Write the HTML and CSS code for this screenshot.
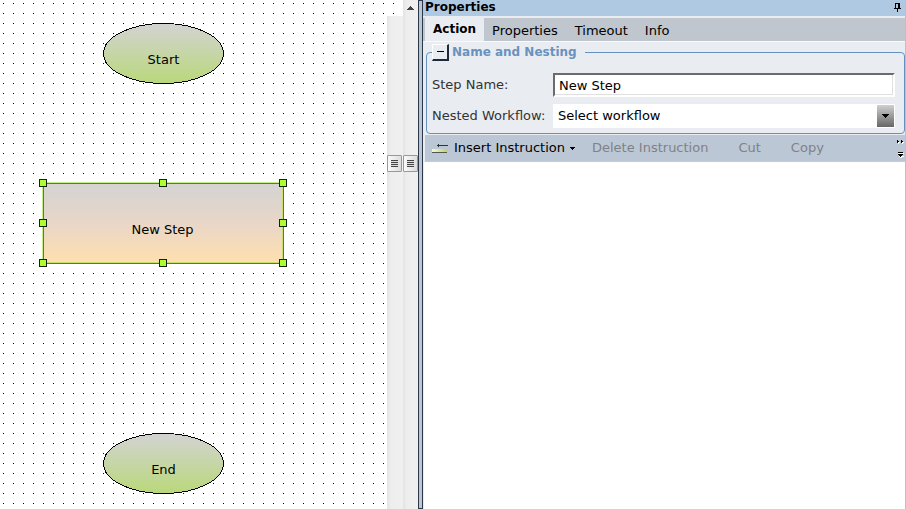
FILE: index.html
```html
<!DOCTYPE html>
<html lang="en">
<head>
<meta charset="utf-8">
<title>Workflow designer</title>
<link rel="stylesheet" href="styles.css">
</head>
<body>
<div class="app">
  <main class="designer">
    <div class="canvas">
      <div class="node node-start">
        <svg class="shape" viewBox="0 0 121 61" aria-hidden="true">
          <defs><linearGradient id="terminal" x1="0" y1="0" x2="0" y2="1"><stop offset="0" stop-color="#d3d3d3"/><stop offset="1" stop-color="#b9d87a"/></linearGradient></defs>
          <ellipse cx="60.5" cy="30.5" rx="60" ry="30" fill="url(#terminal)" stroke="#000"/>
        </svg>
        <span class="node-label">Start</span>
      </div>
      <div class="node node-step">
        <span class="node-label">New Step</span>
        <i class="handle left top"></i><i class="handle center top"></i><i class="handle right top"></i>
        <i class="handle left middle"></i><i class="handle right middle"></i>
        <i class="handle left bottom"></i><i class="handle center bottom"></i><i class="handle right bottom"></i>
      </div>
      <div class="node node-end">
        <svg class="shape" viewBox="0 0 121 61" aria-hidden="true"><ellipse cx="60.5" cy="30.5" rx="60" ry="30" fill="url(#terminal)" stroke="#000"/></svg>
        <span class="node-label">End</span>
      </div>
    </div>
    <div class="scroll scroll-inner"><div class="thumb"><i class="grip"></i></div></div>
    <div class="scroll scroll-outer">
      <svg class="scroll-up" viewBox="0 0 7 4" aria-hidden="true"><path d="M3 0h1v1h1v1h1v1h1v1H0V3h1V2h1V1h1z" fill="#444"/></svg>
      <div class="thumb"><i class="grip"></i></div>
    </div>
  </main>
  <div class="splitter"></div>
  <aside class="panel">
    <header class="title">
      <h1>Properties</h1>
      <svg class="pin" viewBox="0 0 7 9" aria-hidden="true"><path d="M1 0h5v5h1v1H4v3H3V6H0V5h1zM2 1v4h2V1z" fill="#000" fill-rule="evenodd"/></svg>
    </header>
    <nav class="tabs">
      <button class="tab active" type="button">Action</button>
      <button class="tab" type="button">Properties</button>
      <button class="tab" type="button">Timeout</button>
      <button class="tab" type="button">Info</button>
    </nav>
    <form class="body">
      <fieldset class="group">
        <legend><button class="collapse" type="button" aria-label="Collapse"><i></i></button>Name and Nesting</legend>
        <div class="fields">
          <label for="step">Step Name:</label>
          <input id="step" type="text" value="New Step">
          <label for="nested">Nested Workflow:</label>
          <div class="combo">
            <select id="nested"><option>Select workflow</option></select>
            <span class="combo-arrow"><svg viewBox="0 0 7 4" aria-hidden="true"><path d="M0 0h7v1H6v1H5v1H4v1H3V3H2V2H1V1H0z"/></svg></span>
          </div>
        </div>
      </fieldset>
    </form>
    <div class="toolbar">
      <button class="tool insert" type="button">
        <svg class="insert-icon" viewBox="0 0 16 10" aria-hidden="true">
          <defs><linearGradient id="bar"><stop offset="0" stop-color="#f2f8dd"/><stop offset="1" stop-color="#b5d56c"/></linearGradient></defs>
          <path d="M0 6h15v3H0z" fill="url(#bar)"/><path d="M0 9h15v1H0z" fill="#555"/><path d="M5 2h11v1H7v1H6V3H5zM6 1h1v1H6z" fill="#333"/>
        </svg>
        Insert Instruction
        <svg class="caret" viewBox="0 0 5 3" aria-hidden="true"><path d="M0 0h5v1H4v1H3v1H2V2H1V1H0z"/></svg>
      </button>
      <button class="tool" type="button" disabled>Delete Instruction</button>
      <button class="tool" type="button" disabled>Cut</button>
      <button class="tool" type="button" disabled>Copy</button>
      <button class="overflow" type="button" aria-label="More">
        <svg viewBox="0 0 7 19" aria-hidden="true"><path d="M1 2h1v1h1v1H2v1H1zM5 2h1v1h1v1H6v1H5zM1 14h6v1H1zM2 17h5v1H5v1H3v-1H2z" fill="#fff"/><path d="M0 1h1v1h1v1H1v1H0zM4 1h1v1h1v1H5v1H4zM1 13h5v1H1zM1 15h5v1H5v1H4v1H3v-1H2v-1H1z"/></svg>
      </button>
    </div>
    <div class="instructions"></div>
  </aside>
</div>
</body>
</html>
```

FILE: styles.css
```css
* { box-sizing: border-box; }
html, body { height: 100%; }
body { margin: 0; overflow: hidden; font: 13px/16px "DejaVu Sans", Verdana, sans-serif; color: #000; background: #fff; }
button, input, select { font: inherit; color: inherit; margin: 0; }
button { padding: 0; border: 0; background: none; white-space: nowrap; }
svg { shape-rendering: crispEdges; }

.app { display: grid; grid-template-columns: 418fr 5px 483fr; height: 100%; }

/* Diagram canvas: one grid dot every 10px */
.designer { display: flex; min-width: 0; background: conic-gradient(from 270deg at 1px 1px, #000 90deg, transparent 0) 3px 3px / 10px 10px #fff; }
.canvas { position: relative; flex: 1; min-width: 0; }
.node { position: absolute; display: flex; justify-content: center; }
.node-start, .node-end { left: 103px; width: 121px; height: 61px; padding-top: 29px; }
.node-start { top: 23px; }
.node-end { top: 433px; }
.shape { position: absolute; inset: 0; width: 100%; height: 100%; }
.node-label { position: relative; }
.node-step { left: 42px; top: 182px; width: 242px; height: 82px; padding-top: 40px; border: 1px solid #4f8312; border-width: 0 1px 1px 0; background: linear-gradient(#d3d3d3, #e8d6c8 50%, #ffdfae); box-shadow: inset 1px 1px #c4ee88, inset 2px 2px #5c7d2c, inset -1px -1px #c9e070; }
.handle { position: absolute; width: 8px; height: 8px; border: 1px solid #10200c; background: #adff2f; }
.left { left: -3px; }
.center { left: 117px; }
.right { right: -4px; }
.top { top: -3px; }
.middle { top: 37px; }
.bottom { bottom: -4px; }

.scroll { display: flex; flex-direction: column; background: linear-gradient(90deg, #e3e3e3, #eee 4px, #f0f0f0); }
.scroll-inner { width: 16px; margin-top: 16px; padding-top: 139px; }
.scroll-outer { width: 15px; padding-top: 6px; }
.scroll-up { width: 7px; height: 4px; margin: 0 4px 145px; }
.thumb { width: 15px; height: 17px; padding: 4px 3px; border: 1px solid #999; border-radius: 1px; background: linear-gradient(90deg, #fafafa, #ddd); }
.grip { display: block; width: 7px; height: 7px; background: repeating-linear-gradient(#444 0 1px, #ddd 1px 2px); }

.splitter { border: 1px solid #2c3848; background: #bcc7d5; }

.panel { display: flex; flex-direction: column; min-width: 0; border-right: 1px solid #c0c0c0; background: #e9edf2; }
.title { display: flex; align-items: center; justify-content: space-between; height: 16px; padding: 0 4px 2px 2px; background: #b0c9e2; }
.title h1 { margin: 0; font-size: 12px; line-height: 14px; }
.pin { width: 7px; height: 9px; }
.tabs { display: flex; align-items: flex-end; height: 25px; padding-left: 2px; background: linear-gradient(#e9edf2 2px, #bfc6ce 2px); }
.tab { height: 23px; padding-top: 2px; margin-right: 17px; }
.tab.active { height: 25px; padding: 0 8px; margin-right: 8px; font-size: 12px; font-weight: bold; background: #e9edf2; border-radius: 2px 2px 0 0; }
.body { padding: 1px 0 1px 3px; border-top: 1px solid #f8fafc; }
.group { min-width: 0; margin: 0; padding: 12px 9px 5px 5px; border: 1px solid #6391c0; border-radius: 4px; }
legend { display: flex; align-items: center; gap: 3px; height: 18px; padding: 0 8px 0 0; font-size: 12px; font-weight: bold; color: #6a92be; }
.collapse { display: flex; align-items: center; justify-content: center; width: 17px; height: 17px; border: 1px solid #fff; border-right: 2px solid #1d2a3c; border-bottom: 2px solid #1d2a3c; }
.collapse i { width: 7px; height: 1px; background: #000; }
.fields { display: grid; grid-template-columns: 121px 1fr; row-gap: 7px; align-items: center; color: #333; }
.fields input { width: 100%; height: 24px; padding: 0 4px; border: 2px solid #fff; border-top-color: #6b6b6b; border-left-color: #6b6b6b; border-radius: 0; background: #fff; box-shadow: inset -1px -1px #e0e0e0; color: #000; outline: 0; }
.combo { position: relative; height: 24px; border: 1px solid #fff; color: #000; }
.combo select { appearance: none; display: block; width: 100%; height: 22px; padding: 0 20px 0 4px; border: 0; border-radius: 0; background: #fff; outline: 0; }
.combo-arrow { position: absolute; top: 0; right: 0; display: flex; align-items: center; justify-content: center; width: 17px; height: 22px; background: linear-gradient(#d0d0d0, #666); pointer-events: none; }
.combo-arrow svg { width: 7px; height: 4px; }

.toolbar { display: flex; align-items: center; height: 27px; margin-left: 2px; padding: 0 1px 0 7px; border-bottom: 1px solid #b0d0f5; background: #bcc7d5; }
.tool { margin-right: 30px; }
.tool:disabled { color: #808285; }
.insert { display: flex; align-items: center; margin-right: 17px; }
.insert-icon { width: 16px; height: 10px; margin-right: 6px; }
.caret { width: 5px; height: 3px; margin-left: 5px; }
.overflow { display: flex; margin-left: auto; }
.overflow svg { width: 7px; height: 19px; }
.instructions { flex: 1; margin-left: 1px; background: #fff; }
```
